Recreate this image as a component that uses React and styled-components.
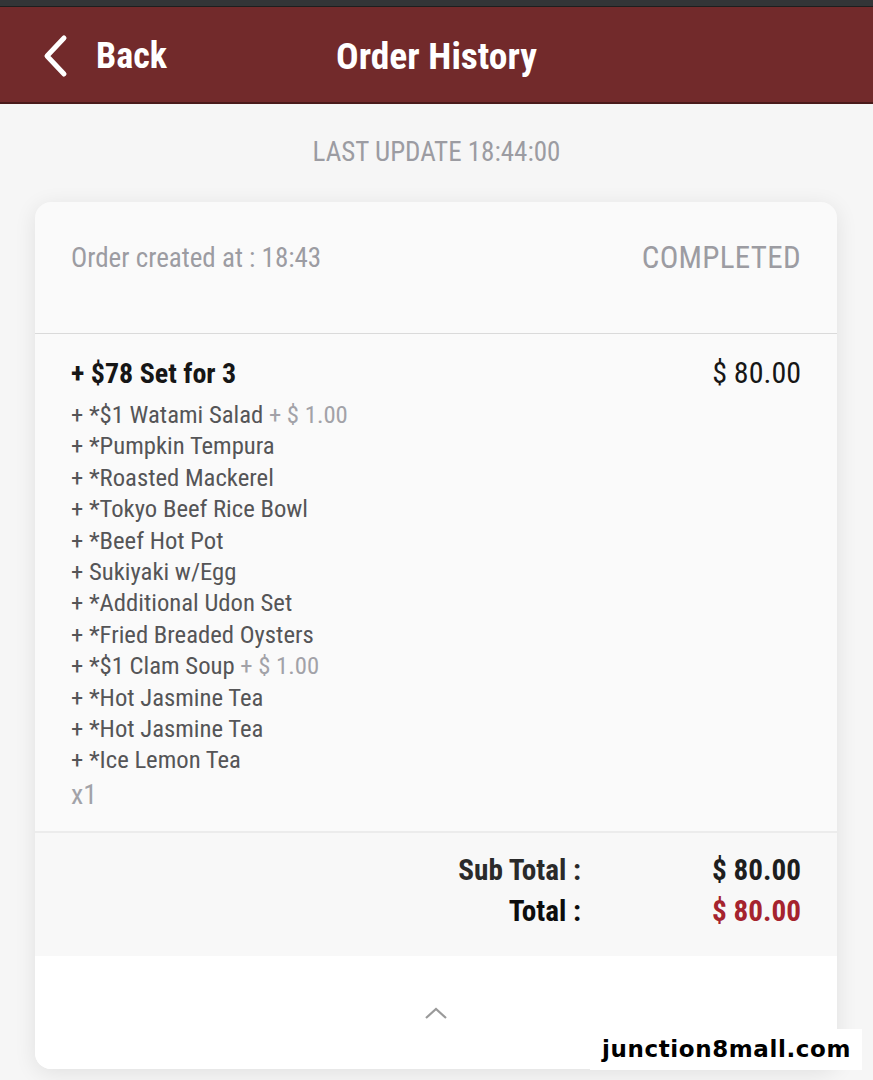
import React from "react";
import styled, { createGlobalStyle } from "styled-components";

const Global = createGlobalStyle`
  html, body { margin: 0; padding: 0; background: #f6f6f6; }
  body { font-family: "Roboto Condensed", "Liberation Sans Narrow", "DejaVu Sans Condensed", Roboto, sans-serif; }
  * { box-sizing: border-box; }
`;

const Page = styled.div`
  width: 873px;
  height: 1080px;
  background: #f6f6f6;
  position: relative;
  overflow: hidden;
  display: flex;
  flex-direction: column;
`;

const StatusStrip = styled.div`
  height: 7px;
  background: #333537;
  border-bottom: 1px solid #1e1e1e;
`;

const Header = styled.header`
  height: 97px;
  background: #722a2b;
  border-bottom: 2px solid #4a1a1b;
  display: grid;
  grid-template-columns: 1fr auto 1fr;
  align-items: center;
  padding: 3px 42px 0 42px;
  color: #fff;
`;

const BackButton = styled.div`
  display: flex;
  align-items: center;
  gap: 26px;
  font-weight: 700;
  font-size: 36px;
`;

const Title = styled.h1`
  margin: 0;
  font-size: 37.5px;
  font-weight: 700;
  text-align: center;
`;

const LastUpdate = styled.div`
  text-align: center;
  color: #9c9ca2;
  font-size: 27px;
  padding: 32px 0 0;
  height: 98px;
`;

const Card = styled.section`
  margin: 0 36px 0 35px;
  background: #fafafa;
  border-radius: 16px;
  box-shadow: 0 4px 22px rgba(0, 0, 0, 0.09);
  overflow: hidden;
`;

const CardHead = styled.div`
  height: 132px;
  display: flex;
  justify-content: space-between;
  align-items: flex-start;
  padding: 37px 36px 0 36px;
  border-bottom: 1.5px solid #dadada;
  color: #9c9ca2;
`;

const Created = styled.span`
  font-size: 27px;
  padding-top: 3px;
`;

const Status = styled.span`
  font-size: 31px;
  letter-spacing: 0.3px;
`;

const Items = styled.div`
  padding: 21px 36px 18px 36px;
  border-bottom: 2px solid #ececec;
`;

const ItemRow = styled.div`
  display: flex;
  justify-content: space-between;
  align-items: baseline;
`;

const ItemName = styled.div`
  font-size: 28px;
  font-weight: 700;
  color: #161616;
  line-height: 36px;
`;

const ItemPrice = styled.div`
  font-size: 30px;
  color: #161616;
  line-height: 36px;
`;

const Options = styled.ul`
  list-style: none;
  margin: 7px 0 0;
  padding: 0;
`;

const Option = styled.li`
  font-size: 24.7px;
  line-height: 31.4px;
  color: #555557;
`;

const Extra = styled.span`
  color: #a2a2a8;
`;

const Qty = styled.div`
  font-size: 28px;
  color: #a2a2a8;
  line-height: 36px;
  margin-top: 1px;
`;

const Totals = styled.div`
  background: #f8f8f8;
  padding: 18px 36px 26px;
  display: grid;
  grid-template-columns: 1fr 220px;
  row-gap: 3px;
`;

const TotalLabel = styled.div`
  text-align: right;
  font-size: 29.2px;
  font-weight: 700;
  line-height: 38px;
  color: ${(p) => (p.$strong ? "#0d0d0d" : "#2a2a2a")};
`;

const TotalValue = styled.div`
  text-align: right;
  font-size: 29.2px;
  font-weight: 700;
  line-height: 38px;
  color: ${(p) => (p.$accent ? "#a5232e" : "#1e1e1e")};
`;

const Footer = styled.div`
  background: #fff;
  height: 113px;
  display: flex;
  justify-content: center;
  align-items: flex-start;
  padding-top: 50px;
`;

const Watermark = styled.div`
  position: absolute;
  right: 11px;
  bottom: 10px;
  background: #fff;
  padding: 7px 11px 8px 12px;
  font-family: "DejaVu Sans", sans-serif;
  font-weight: 700;
  font-size: 23px;
  letter-spacing: 0.6px;
  color: #000;
`;

const options = [
  ["+ *$1 Watami Salad", "+ $ 1.00"],
  ["+ *Pumpkin Tempura"],
  ["+ *Roasted Mackerel"],
  ["+ *Tokyo Beef Rice Bowl"],
  ["+ *Beef Hot Pot"],
  ["+ Sukiyaki w/Egg"],
  ["+ *Additional Udon Set"],
  ["+ *Fried Breaded Oysters"],
  ["+ *$1 Clam Soup", "+ $ 1.00"],
  ["+ *Hot Jasmine Tea"],
  ["+ *Hot Jasmine Tea"],
  ["+ *Ice Lemon Tea"],
];

export default function App() {
  return (
    <Page>
      <Global />
      <StatusStrip />
      <Header>
        <BackButton>
          <svg width="28" height="44" viewBox="0 0 28 44">
            <path d="M22 4 L5 22 L22 40" fill="none" stroke="#fff" strokeWidth="5" strokeLinecap="round" strokeLinejoin="round" />
          </svg>
          Back
        </BackButton>
        <Title>Order History</Title>
        <div />
      </Header>
      <LastUpdate>LAST UPDATE 18:44:00</LastUpdate>
      <Card>
        <CardHead>
          <Created>Order created at : 18:43</Created>
          <Status>COMPLETED</Status>
        </CardHead>
        <Items>
          <ItemRow>
            <ItemName>+ $78 Set for 3</ItemName>
            <ItemPrice>$ 80.00</ItemPrice>
          </ItemRow>
          <Options>
            {options.map(([name, extra], i) => (
              <Option key={i}>
                {name}
                {extra && <Extra> {extra}</Extra>}
              </Option>
            ))}
          </Options>
          <Qty>x1</Qty>
        </Items>
        <Totals>
          <TotalLabel>Sub Total :</TotalLabel>
          <TotalValue>$ 80.00</TotalValue>
          <TotalLabel $strong>Total :</TotalLabel>
          <TotalValue $accent>$ 80.00</TotalValue>
        </Totals>
        <Footer>
          <svg width="24" height="14" viewBox="0 0 24 14">
            <path d="M2 12 L12 3 L22 12" fill="none" stroke="#9a9a9a" strokeWidth="2.2" />
          </svg>
        </Footer>
      </Card>
      <Watermark>junction8mall.com</Watermark>
    </Page>
  );
}
